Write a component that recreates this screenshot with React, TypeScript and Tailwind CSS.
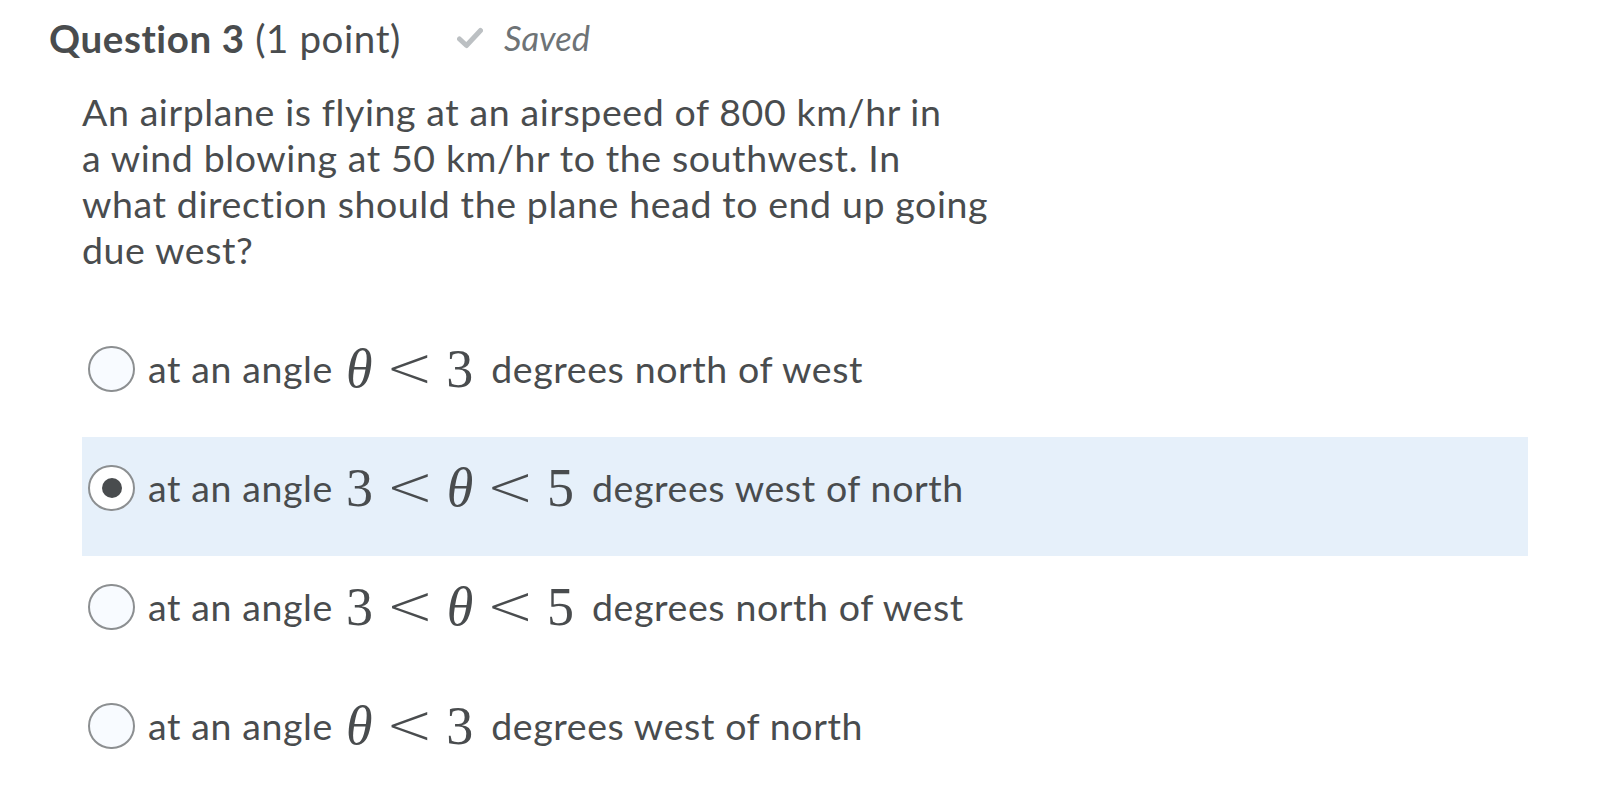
import type { ReactNode } from 'react';

interface OptionProps {
  selected?: boolean;
  math: ReactNode;
  tail: string;
}

function Theta() {
  return <span className="font-['Liberation_Serif',serif] italic">θ</span>;
}

function Lt() {
  return <span className="mx-[13px] font-['DejaVu_Sans',sans-serif] text-[57px] font-extralight">&lt;</span>;
}

function Option({ selected, math, tail }: OptionProps) {
  return (
    <div className={`flex h-[119px] items-start pt-[28px] pl-[6px] ${selected ? 'bg-[#e6f0fa]' : ''}`}>
      <div className="flex items-center gap-[13px]">
        <div
          className={`flex h-[46px] w-[47px] shrink-0 items-center justify-center rounded-full border-2 border-[#8c8f91] ${
            selected ? 'bg-white' : 'bg-[#f8fbff]'
          }`}
        >
          {selected && <div className="h-[20px] w-[20px] rounded-full bg-[#494c4e]" />}
        </div>
        <p className="whitespace-nowrap text-[37.5px] leading-[46px] tracking-[0.6px] text-[#494c4e]">
          at an angle
          <span className="ml-[13px] mr-[18px] font-['Liberation_Serif',serif] text-[54px] leading-[0] tracking-normal align-[-4px]">
            {math}
          </span>
          {tail}
        </p>
      </div>
    </div>
  );
}

export default function App() {
  return (
    <div className="min-h-screen bg-white font-['Lato',sans-serif] text-[#494c4e]">
      <div className="pt-[12px] pl-[49px]">
        {/* Header */}
        <div className="flex items-center">
          <h2 className="text-[38.5px] leading-[46px] tracking-[0.6px]">
            <span className="font-bold">Question 3</span> (1 point)
          </h2>
          <div className="ml-[56px] flex items-center gap-[21px]">
            <svg width="26" height="22" viewBox="0 0 26 22" fill="none">
              <path d="M2.5 12 L9.5 18.5 L23.5 3.5" stroke="#bcc0c3" strokeWidth="5" strokeLinecap="round" strokeLinejoin="round" />
            </svg>
            <span className="text-[34.5px] italic text-[#6e7376]">Saved</span>
          </div>
        </div>

        {/* Question body */}
        <p className="mt-[25px] ml-[33px] text-[37.5px] leading-[46px] tracking-[0.6px]">
          An airplane is flying at an airspeed of 800 km/hr in
          <br />
          a wind blowing at 50 km/hr to the southwest. In
          <br />
          what direction should the plane head to end up going
          <br />
          due west?
        </p>

        {/* Options */}
        <div className="mt-[45px] ml-[33px] mr-[78px]">
          <Option
            math={<><Theta /><Lt />3</>}
            tail="degrees north of west"
          />
          <Option
            selected
            math={<>3<Lt /><Theta /><Lt />5</>}
            tail="degrees west of north"
          />
          <Option
            math={<>3<Lt /><Theta /><Lt />5</>}
            tail="degrees north of west"
          />
          <Option
            math={<><Theta /><Lt />3</>}
            tail="degrees west of north"
          />
        </div>
      </div>
    </div>
  );
}
